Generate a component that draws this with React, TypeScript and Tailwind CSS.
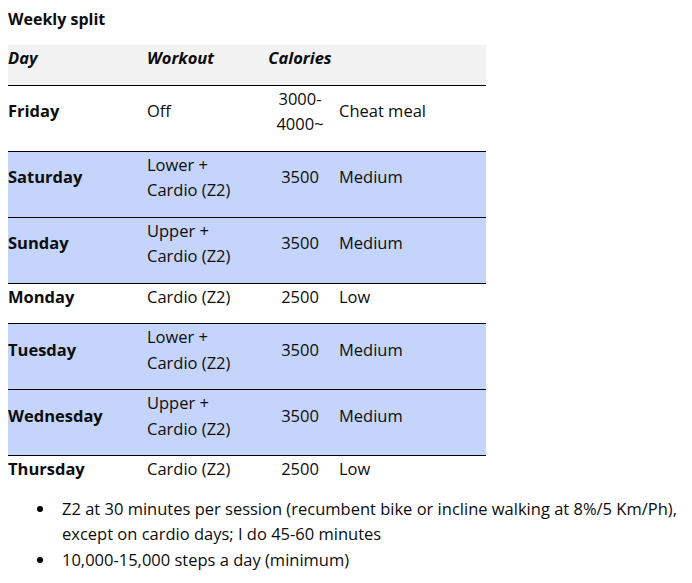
import React from 'react';

type Row = {
  day: string;
  workout: string[];
  calories: string[];
  level: string;
  shaded?: boolean;
};

const rows: Row[] = [
  { day: 'Friday', workout: ['Off'], calories: ['3000-', '4000~'], level: 'Cheat meal' },
  { day: 'Saturday', workout: ['Lower +', 'Cardio (Z2)'], calories: ['3500'], level: 'Medium', shaded: true },
  { day: 'Sunday', workout: ['Upper +', 'Cardio (Z2)'], calories: ['3500'], level: 'Medium', shaded: true },
  { day: 'Monday', workout: ['Cardio (Z2)'], calories: ['2500'], level: 'Low' },
  { day: 'Tuesday', workout: ['Lower +', 'Cardio (Z2)'], calories: ['3500'], level: 'Medium', shaded: true },
  { day: 'Wednesday', workout: ['Upper +', 'Cardio (Z2)'], calories: ['3500'], level: 'Medium', shaded: true },
  { day: 'Thursday', workout: ['Cardio (Z2)'], calories: ['2500'], level: 'Low' },
];

const font = { fontFamily: '"Open Sans", "Liberation Sans", sans-serif' };

export default function App() {
  return (
    <div className="min-h-[583px] bg-white text-[#0d0d0d] text-[16.5px] leading-[25.5px]" style={font}>
      <div className="px-2 pt-[8px]">
        <h1 className="text-[16px] font-bold leading-[22px] h-[37px]">Weekly split</h1>

        <table className="w-[478px] table-fixed border-collapse">
          <colgroup>
            <col className="w-[139px]" />
            <col className="w-[115px]" />
            <col className="w-[76px]" />
            <col />
          </colgroup>
          <thead>
            <tr className="bg-[#f2f2f2] border-b border-black">
              <th className="p-0 pb-[14px] text-left font-bold italic align-middle">Day</th>
              <th className="p-0 pb-[14px] text-left font-bold italic align-middle">Workout</th>
              <th className="p-0 pb-[14px] text-center font-bold italic align-middle">Calories</th>
              <th className="p-0 pb-[14px]"></th>
            </tr>
          </thead>
          <tbody>
            {rows.map((r, i) => (
              <tr
                key={r.day}
                className={
                  (r.shaded ? 'bg-[#c5d4fb] ' : 'bg-white ') +
                  (i < rows.length - 1 ? 'border-b border-black' : '')
                }
              >
                <td className="p-0 pb-[14px] font-bold align-middle">{r.day}</td>
                <td className="p-0 pb-[14px] align-middle">
                  {r.workout.map((w) => (
                    <div key={w}>{w}</div>
                  ))}
                </td>
                <td className="p-0 pb-[14px] text-center align-middle">
                  {r.calories.map((c) => (
                    <div key={c}>{c}</div>
                  ))}
                </td>
                <td className="p-0 pb-[14px] pl-[1px] align-middle">{r.level}</td>
              </tr>
            ))}
          </tbody>
        </table>

        <ul className="mt-0">
          <li className="flex">
            <span className="w-[54px] flex justify-end pr-[19px] pt-[10px]">
              <span className="block w-[6px] h-[6px] rounded-full bg-black" />
            </span>
            <span>
              Z2 at 30 minutes per session (recumbent bike or incline walking at 8%/5 Km/Ph),
              <br />
              except on cardio days; I do 45-60 minutes
            </span>
          </li>
          <li className="flex">
            <span className="w-[54px] flex justify-end pr-[19px] pt-[10px]">
              <span className="block w-[6px] h-[6px] rounded-full bg-black" />
            </span>
            <span>10,000-15,000 steps a day (minimum)</span>
          </li>
        </ul>
      </div>
    </div>
  );
}
